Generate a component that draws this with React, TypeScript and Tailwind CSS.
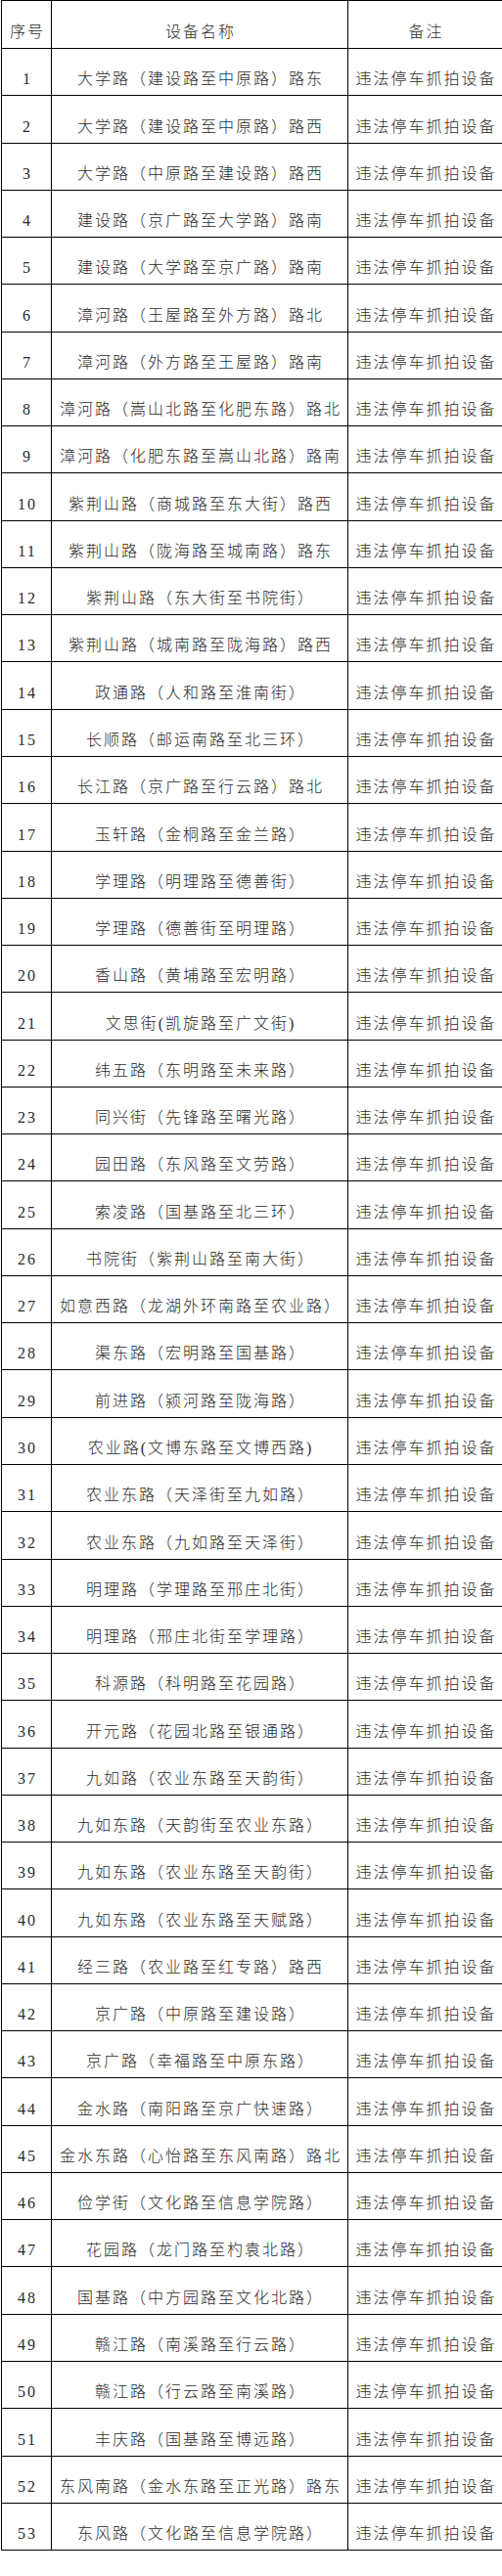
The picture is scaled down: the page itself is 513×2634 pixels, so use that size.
const rows: string[] = [
  '大学路（建设路至中原路）路东',
  '大学路（建设路至中原路）路西',
  '大学路（中原路至建设路）路西',
  '建设路（京广路至大学路）路南',
  '建设路（大学路至京广路）路南',
  '漳河路（王屋路至外方路）路北',
  '漳河路（外方路至王屋路）路南',
  '漳河路（嵩山北路至化肥东路）路北',
  '漳河路（化肥东路至嵩山北路）路南',
  '紫荆山路（商城路至东大街）路西',
  '紫荆山路（陇海路至城南路）路东',
  '紫荆山路（东大街至书院街）',
  '紫荆山路（城南路至陇海路）路西',
  '政通路（人和路至淮南街）',
  '长顺路（邮运南路至北三环）',
  '长江路（京广路至行云路）路北',
  '玉轩路（金桐路至金兰路）',
  '学理路（明理路至德善街）',
  '学理路（德善街至明理路）',
  '香山路（黄埔路至宏明路）',
  '文思街(凯旋路至广文街)',
  '纬五路（东明路至未来路）',
  '同兴街（先锋路至曙光路）',
  '园田路（东风路至文劳路）',
  '索凌路（国基路至北三环）',
  '书院街（紫荆山路至南大街）',
  '如意西路（龙湖外环南路至农业路）',
  '渠东路（宏明路至国基路）',
  '前进路（颍河路至陇海路）',
  '农业路(文博东路至文博西路)',
  '农业东路（天泽街至九如路）',
  '农业东路（九如路至天泽街）',
  '明理路（学理路至邢庄北街）',
  '明理路（邢庄北街至学理路）',
  '科源路（科明路至花园路）',
  '开元路（花园北路至银通路）',
  '九如路（农业东路至天韵街）',
  '九如东路（天韵街至农业东路）',
  '九如东路（农业东路至天韵街）',
  '九如东路（农业东路至天赋路）',
  '经三路（农业路至红专路）路西',
  '京广路（中原路至建设路）',
  '京广路（幸福路至中原东路）',
  '金水路（南阳路至京广快速路）',
  '金水东路（心怡路至东风南路）路北',
  '俭学街（文化路至信息学院路）',
  '花园路（龙门路至杓袁北路）',
  '国基路（中方园路至文化北路）',
  '赣江路（南溪路至行云路）',
  '赣江路（行云路至南溪路）',
  '丰庆路（国基路至博远路）',
  '东风南路（金水东路至正光路）路东',
  '东风路（文化路至信息学院路）',
]

const REMARK = '违法停车抓拍设备'

function Cell({ width, last, children }: { width: string; last?: boolean; children: React.ReactNode }) {
  return (
    <div
      className={`${width} ${last ? '' : 'border-r border-black'} flex items-end justify-center pb-[8px] whitespace-nowrap`}
    >
      <span className="leading-[16px] tracking-[2px] pl-[2px]">{children}</span>
    </div>
  )
}

export default function App() {
  return (
    <div className="w-[513px] min-h-[2634px] bg-white text-[#2a2a2a] font-light text-[16px] font-['Liberation_Serif','Noto_Sans_CJK_SC',serif]">
      <div className="ml-[1px] w-[512px] border-l border-t border-black">
        {/* Header */}
        <div className="flex h-[49px] border-b border-black">
          <Cell width="w-[51px]">序号</Cell>
          <Cell width="w-[303px]">设备名称</Cell>
          <Cell width="w-[157px]" last>备注</Cell>
        </div>

        {/* Rows */}
        {rows.map((name, i) => (
          <div key={i} className="flex h-[48.28px] border-b border-black">
            <Cell width="w-[51px]">{i + 1}</Cell>
            <Cell width="w-[303px]">{name}</Cell>
            <Cell width="w-[157px]" last>{REMARK}</Cell>
          </div>
        ))}
      </div>
    </div>
  )
}
